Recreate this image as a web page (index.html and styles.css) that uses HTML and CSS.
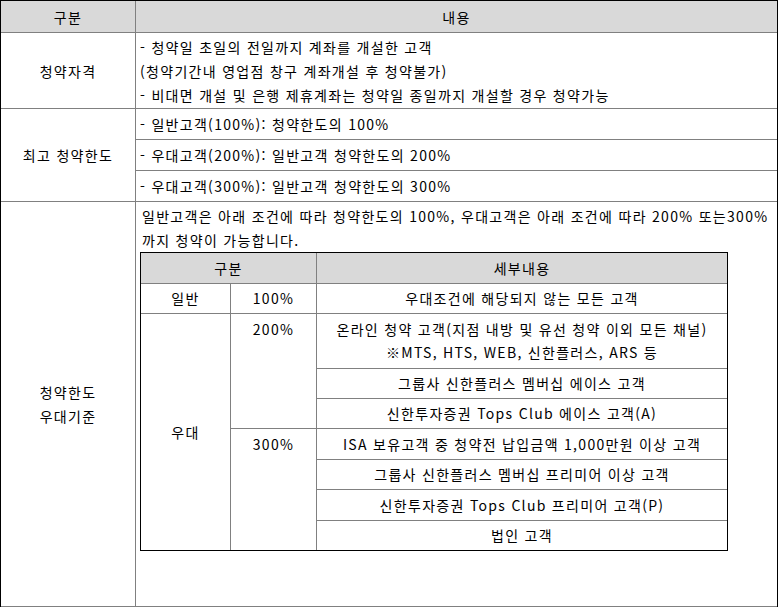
FILE: index.html
```html
<!DOCTYPE html>
<html lang="ko">
<head>
<meta charset="utf-8">
<title>청약한도</title>
<link rel="stylesheet" href="styles.css">
</head>
<body>
<div class="main">
  <div class="cell col1 head center">구분</div>
  <div class="cell head center">내용</div>

  <div class="cell col1 center">청약자격</div>
  <div class="cell left">
    <div>- 청약일 초일의 전일까지 계좌를 개설한 고객</div>
    <div>(청약기간내 영업점 창구 계좌개설 후 청약불가)</div>
    <div>- 비대면 개설 및 은행 제휴계좌는 청약일 종일까지 개설할 경우 청약가능</div>
  </div>

  <div class="cell col1 center span3">최고 청약한도</div>
  <div class="cell left">- 일반고객(100%): 청약한도의 100%</div>
  <div class="cell left">- 우대고객(200%): 일반고객 청약한도의 200%</div>
  <div class="cell left">- 우대고객(300%): 일반고객 청약한도의 300%</div>

  <div class="cell col1 center">청약한도<br>우대기준</div>
  <div class="cell desc">
    <p>일반고객은 아래 조건에 따라 청약한도의 100%, 우대고객은 아래 조건에 따라 200% 또는300%</p>
    <p>까지 청약이 가능합니다.</p>
    <div class="inner">
      <div class="ic ic1 ihead icenter span2">구분</div>
      <div class="ic ihead icenter">세부내용</div>

      <div class="ic ic1 icenter">일반</div>
      <div class="ic ic1 icenter">100%</div>
      <div class="ic icenter">우대조건에 해당되지 않는 모든 고객</div>

      <div class="ic ic1 icenter span7 last">우대</div>
      <div class="ic ic1 itop span3r">200%</div>
      <div class="ic icenter">온라인 청약 고객(지점 내방 및 유선 청약 이외 모든 채널)<br>※MTS, HTS, WEB, 신한플러스, ARS 등</div>
      <div class="ic icenter">그룹사 신한플러스 멤버십 에이스 고객</div>
      <div class="ic icenter">신한투자증권 Tops Club 에이스 고객(A)</div>

      <div class="ic ic1 itop span4r last">300%</div>
      <div class="ic icenter">ISA 보유고객 중 청약전 납입금액 1,000만원 이상 고객</div>
      <div class="ic icenter">그룹사 신한플러스 멤버십 프리미어 이상 고객</div>
      <div class="ic icenter">신한투자증권 Tops Club 프리미어 고객(P)</div>
      <div class="ic icenter last">법인 고객</div>
    </div>
  </div>
</div>
</body>
</html>
```

FILE: styles.css
```css
* {
  box-sizing: border-box;
}

html,
body {
  margin: 0;
  padding: 0;
  background: #ffffff;
}

body {
  font-family: "Noto Sans CJK KR", "Noto Sans", sans-serif;
  font-size: 14px;
  letter-spacing: 1.3px;
  color: #000000;
}

.main {
  width: 778px;
  display: grid;
  grid-template-columns: 135px 641px;
  grid-template-rows: 32px 76px 31px 31px 31px 405px;
  border: 1px solid #000000;
  border-bottom: none;
}

.cell {
  border-bottom: 1px solid #808080;
  line-height: 24px;
}

.col1 {
  border-right: 1px solid #808080;
}

.head {
  background: #d9d9d9;
}

.center {
  display: flex;
  align-items: center;
  justify-content: center;
  text-align: center;
}

.left {
  display: flex;
  flex-direction: column;
  justify-content: center;
  padding-left: 4px;
  white-space: nowrap;
}

.span3 {
  grid-row: span 3;
}

.desc {
  padding: 2px 0 0 4px;
}

.desc p {
  margin: 0;
  padding-left: 2px;
  white-space: nowrap;
}

.inner {
  width: 588px;
  display: grid;
  grid-template-columns: 90px 86px 410px;
  grid-template-rows: 31px 30px 55px 30px 30px 31px 30px 31px 29px;
  border: 1px solid #000000;
  line-height: 23px;
}

.ic {
  border-bottom: 1px solid #808080;
  white-space: nowrap;
}

.ic.last {
  border-bottom: none;
}

.ic1 {
  border-right: 1px solid #808080;
}

.ihead {
  background: #d9d9d9;
}

.icenter {
  display: flex;
  flex-direction: column;
  align-items: center;
  justify-content: center;
  text-align: center;
}

.itop {
  text-align: center;
  padding-top: 4px;
}

.span2 {
  grid-column: span 2;
}

.span7 {
  grid-row: span 7;
}

.span3r {
  grid-row: span 3;
}

.span4r {
  grid-row: span 4;
}
```
